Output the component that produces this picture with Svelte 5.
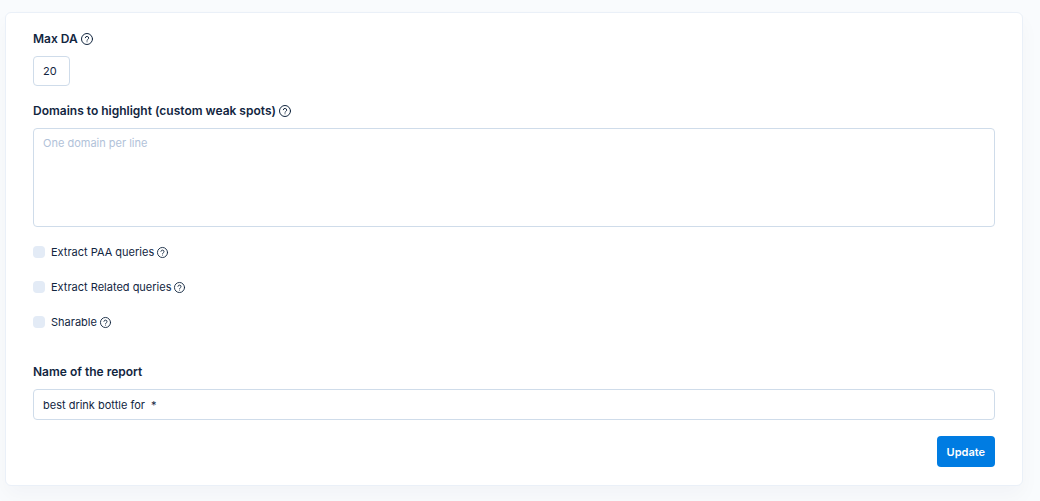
<script>
  let maxDa = $state('20');
  let domains = $state('');
  let reportName = $state('best drink bottle for  *');
  let options = $state([
    { id: 'paa', label: 'Extract PAA queries', checked: false },
    { id: 'related', label: 'Extract Related queries', checked: false },
    { id: 'sharable', label: 'Sharable', checked: false },
  ]);
</script>

{#snippet help()}
  <svg class="help" viewBox="0 0 24 24" aria-hidden="true">
    <circle cx="12" cy="12" r="11" />
    <path d="M8.6 9.4a3.4 3.4 0 0 1 6.7 1c0 2.2-3.3 2.5-3.3 4" />
    <path d="M12 17.6v.1" />
  </svg>
{/snippet}

<form class="card" onsubmit={(e) => e.preventDefault()}>
  <div class="group">
    <label class="title" for="max-da">Max DA {@render help()}</label>
    <input class="control short" id="max-da" type="text" bind:value={maxDa} />
  </div>

  <div class="group">
    <label class="title" for="domains">Domains to highlight (custom weak spots) {@render help()}</label>
    <textarea class="control" id="domains" placeholder="One domain per line" bind:value={domains}></textarea>
  </div>

  <div class="checks">
    {#each options as option (option.id)}
      <div class="check">
        <input type="checkbox" id={option.id} bind:checked={option.checked} />
        <label for={option.id}>{option.label} {@render help()}</label>
      </div>
    {/each}
  </div>

  <div class="group">
    <label class="title" for="report-name">Name of the report</label>
    <input class="control" id="report-name" type="text" bind:value={reportName} />
  </div>

  <div class="actions">
    <button type="submit">Update</button>
  </div>
</form>

<style>
  :global(body) {
    background: #f9fbfd;
  }

  .card {
    box-sizing: border-box;
    margin: 12px 17px 15px 5px;
    padding: 17px 27px 18px;
    border: 1px solid #eaf0f8;
    border-radius: 6px;
    background: #fff;
    box-shadow: 0 10px 20px rgba(18, 38, 63, 0.03);
    color: #12263f;
    font: 400 11px/18px Inter, sans-serif;
  }

  .group {
    display: flex;
    flex-direction: column;
    align-items: flex-start;
    gap: 8px;
    margin-bottom: 16px;
  }

  label {
    display: flex;
    align-items: center;
    gap: 3px;
  }

  .title {
    font-size: 12px;
    font-weight: 600;
  }

  .help {
    width: 11px;
    height: 11px;
    overflow: visible;
    fill: none;
    stroke: currentColor;
    stroke-width: 2;
    stroke-linecap: round;
    stroke-linejoin: round;
  }

  .title .help {
    width: 12px;
    height: 12px;
  }

  .control {
    box-sizing: border-box;
    display: block;
    width: 100%;
    height: 31px;
    margin: 0;
    padding: 5px 9px;
    border: 1px solid #cfdcea;
    border-radius: 4px;
    background: #fff;
    color: inherit;
    font: inherit;
    white-space: pre;
  }

  .short {
    width: 37px;
    height: 30px;
  }

  textarea.control {
    height: 99px;
    resize: none;
    white-space: pre-wrap;
  }

  .control::placeholder {
    color: #b1c2d9;
    opacity: 1;
  }

  .checks {
    display: flex;
    flex-direction: column;
    gap: 17px;
    margin-bottom: 32px;
  }

  .check {
    display: flex;
    align-items: center;
    gap: 6px;
  }

  .check input {
    appearance: none;
    width: 12px;
    height: 12px;
    margin: 0;
    border-radius: 4px;
    background: #e3ebf6;
  }

  .check input:checked {
    background: #007ee5;
  }

  .actions {
    display: flex;
    justify-content: flex-end;
  }

  button {
    height: 31px;
    padding: 0 10px;
    border: 0;
    border-radius: 4px;
    background: #007ce2;
    color: #fff;
    font: 600 11px/18px Inter, sans-serif;
    cursor: pointer;
  }
</style>
